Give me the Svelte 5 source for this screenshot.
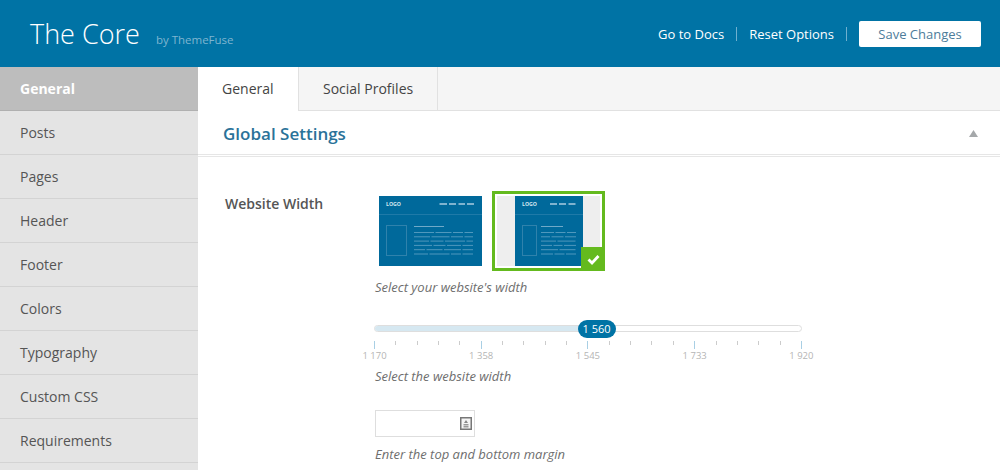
<script>
  const menu = ["General", "Posts", "Pages", "Header", "Footer", "Colors", "Typography", "Custom CSS", "Requirements"];
  const ticks = [];
  for (let i = 0; i <= 20; i++) ticks.push(i);
  const labels = { 0: "1 170", 5: "1 358", 10: "1 545", 15: "1 733", 20: "1 920" };
  // dash patterns of the fake text lines in the two layout previews
  const wideRows = ["20 1.500 16 1.500 10 1.500 12", "16 1.500 18 1.500 12 1.500 11", "15 1.500 13 1.500 20 1.500 9", "18 1.500 12 1.500 14 1.500 13", "11 1.500 16 1.500 17 1.500 13", "14 1.500 20 1.500 10 1.500 13"];
  const narrowRows = ["13 1.500 10 1.500 9", "9 1.500 12 1.500 11", "15 1.500 18", "11 1.500 9 1.500 12", "17 1.500 16", "12 1.500 10 1.500 10"];
</script>

<div class="page">
  <header class="top">
    <div class="brand">
      <span class="name">The Core</span>
      <span class="by">by ThemeFuse</span>
    </div>
    <nav class="actions">
      <a href="#docs">Go to Docs</a>
      <i class="sep"></i>
      <a href="#reset">Reset Options</a>
      <i class="sep"></i>
      <button>Save Changes</button>
    </nav>
  </header>

  <div class="body">
    <aside class="side">
      {#each menu as item, i}
        <div class="item" class:active={i === 0}>{item}</div>
      {/each}
    </aside>

    <main class="main">
      <div class="tabs">
        <div class="tab on">General</div>
        <div class="tab">Social Profiles</div>
      </div>

      <div class="section">
        <h2>Global Settings</h2>
        <svg class="caret" width="9" height="7" viewBox="0 0 9 7"><path d="M4.500 0 9 7H0z" fill="#a5a8aa" /></svg>
      </div>

      <div class="form">
        <div class="label">Website Width</div>
        <div class="controls">
          <div class="thumbs">
            <div class="thumb">
              <svg width="103" height="70" viewBox="0 0 103 70">
                <rect width="103" height="70" fill="#00699b" />
                <text x="7" y="10" class="logo">LOGO</text>
                <path d="M60.500 8h7.500M70 8h7M79.500 8h6.500M88 8h7" stroke="#7fb3cf" stroke-width="2" />
                <path d="M0 18.500h103" stroke="#1f7aa8" />
                <rect x="7.500" y="29.500" width="20" height="30" fill="none" stroke="#2f82ac" />
                <path d="M35 30.500h30" stroke="#6fa9c8" />
                {#each wideRows as dash, r}
                  <path d="M35 {36.500 + r * 4.300}h59" stroke="#4f98bd" stroke-dasharray={dash} />
                {/each}
              </svg>
            </div>
            <div class="thumb picked">
              <div class="box">
                <svg width="68" height="70" viewBox="0 0 68 70">
                  <rect width="68" height="70" fill="#00699b" />
                  <text x="7" y="10" class="logo">LOGO</text>
                  <path d="M35 8h7M44 8h7M53.500 8h7" stroke="#7fb3cf" stroke-width="2" />
                  <path d="M0 18.500h68" stroke="#1f7aa8" />
                  <rect x="7.500" y="29.500" width="14" height="30" fill="none" stroke="#2f82ac" />
                  <path d="M26 30.500h22" stroke="#6fa9c8" />
                  {#each narrowRows as dash, r}
                    <path d="M26 {36.500 + r * 4.300}h35" stroke="#4f98bd" stroke-dasharray={dash} />
                  {/each}
                </svg>
              </div>
              <span class="check">
                <svg width="13" height="11" viewBox="0 0 13 11"><path d="M1.500 5.500 5 9l6.500-7" fill="none" stroke="#fff" stroke-width="2.800" /></svg>
              </span>
            </div>
          </div>
          <p class="help first">Select your website's width</p>

          <div class="slider">
            <div class="track">
              <div class="fill" style="width: 52%"></div>
              <div class="handle" style="left: 52%">1 560</div>
            </div>
            <div class="scale">
              {#each ticks as t}
                <span class="tick" class:major={t % 5 === 0}>
                  {#if labels[t]}<em>{labels[t]}</em>{/if}
                </span>
              {/each}
            </div>
          </div>
          <p class="help second">Select the website width</p>

          <div class="field">
            <svg width="12" height="13" viewBox="0 0 12 13">
              <rect x="0.750" y="0.750" width="10.500" height="11.500" fill="#f4f4f4" stroke="#777" stroke-width="1.500" />
              <path d="M6 3 8 6H4z" fill="#888" />
              <path d="M3.500 7h5v1.500h-5zM3.500 9h5v1.500h-5z" fill="#999" />
            </svg>
          </div>
          <p class="help third">Enter the top and bottom margin</p>
        </div>
      </div>
    </main>
  </div>
</div>

<style>
  :global(body) {
    background: #fff;
    overflow: hidden;
  }

  .page {
    width: 1000px;
    height: 470px;
    overflow: hidden;
    display: flex;
    flex-direction: column;
    font-family: "Open Sans", sans-serif;
    color: #444;
  }

  .top {
    flex: 0 0 67px;
    background: #0073a5;
    display: flex;
    align-items: center;
    justify-content: space-between;
    padding: 0 19px 0 30px;
  }

  .brand {
    display: flex;
    align-items: baseline;
    gap: 16px;
    color: #fff;
  }

  .name {
    font-size: 27px;
    font-weight: 300;
  }

  .by {
    font-size: 11.500px;
    color: #7fb5d0;
  }

  .actions {
    display: flex;
    align-items: center;
    font-size: 13px;
  }

  .actions a {
    color: #fff;
    text-decoration: none;
    font-weight: 500;
  }

  .sep {
    width: 1px;
    height: 14px;
    background: #6fb0cf;
    margin: 0 12px;
  }

  .actions button {
    width: 122px;
    height: 26px;
    border: 0;
    border-radius: 2px;
    background: #fff;
    color: #4d7c9a;
    font: 400 13px "Open Sans", sans-serif;
  }

  .body {
    flex: 1;
    display: flex;
  }

  .side {
    flex: 0 0 198px;
    background: #e4e4e4;
  }

  .item {
    height: 43px;
    line-height: 43px;
    padding-left: 20px;
    font-size: 14px;
    color: #555;
    border-bottom: 1px solid #d3d3d3;
  }

  .item.active {
    background: #bdbdbd;
    color: #fff;
    font-weight: 700;
    border-bottom-color: #b0b0b0;
  }

  .main {
    flex: 1;
  }

  .tabs {
    height: 43px;
    display: flex;
    background: #f5f5f5;
    border-bottom: 1px solid #e1e1e1;
  }

  .tab {
    padding: 0 24px;
    line-height: 43px;
    font-size: 14px;
    color: #444;
    border-right: 1px solid #e1e1e1;
  }

  .tab.on {
    width: 101px;
    box-sizing: border-box;
    background: #fff;
    height: 44px;
  }

  .section {
    display: flex;
    align-items: center;
    justify-content: space-between;
    padding: 1px 22px 0 25px;
    height: 42px;
    border-bottom: 3px double #e6e6e6;
  }

  h2 {
    margin: 0;
    font-size: 17px;
    font-weight: 600;
    color: #2a7299;
  }

  .form {
    display: flex;
    padding-top: 34px;
  }

  .label {
    width: 150px;
    padding: 3px 0 0 27px;
    box-sizing: border-box;
    font-size: 14px;
    font-weight: 600;
    color: #555;
  }

  .controls {
    width: 470px;
    margin-left: 26px;
  }

  .thumbs {
    display: flex;
    gap: 10px;
    align-items: flex-start;
    margin-left: 5px;
  }

  .thumb {
    padding-top: 5px;
    line-height: 0;
  }

  .thumb.picked {
    position: relative;
    padding: 0;
    border: 3px solid #64ba1e;
    width: 107px;
    height: 74px;
  }

  .box {
    margin: 2px;
    height: 70px;
    background: #eee;
    display: flex;
    justify-content: center;
  }

  .check {
    position: absolute;
    right: -3px;
    bottom: -3px;
    width: 24px;
    height: 24px;
    background: #64ba1e;
    display: flex;
    align-items: center;
    justify-content: center;
  }

  .logo {
    font: 700 5.200px "Open Sans", sans-serif;
    fill: #d5e7f0;
  }

  .help {
    margin: 0;
    font-size: 13px;
    font-style: italic;
    color: #6e6e6e;
    line-height: 16px;
  }

  .help.first {
    margin: 8px 0 0 1px;
  }

  .help.second {
    margin: 0 0 0 1px;
  }

  .help.third {
    margin: 9px 0 0 1px;
  }

  .slider {
    width: 428px;
    padding-top: 30px;
    height: 43px;
  }

  .track {
    position: relative;
    height: 7px;
    border: 1px solid #dedede;
    border-radius: 4px;
    background: #fff;
    box-sizing: border-box;
  }

  .fill {
    height: 100%;
    background: #d6e8f1;
    border-radius: 4px 0 0 4px;
  }

  .handle {
    position: absolute;
    top: -6px;
    width: 38px;
    height: 18px;
    margin-left: -19px;
    border-radius: 9px;
    background: #0073a5;
    color: #fff;
    font-size: 11px;
    line-height: 18px;
    text-align: center;
  }

  .scale {
    display: flex;
    justify-content: space-between;
    margin-top: 9px;
  }

  .tick {
    position: relative;
    width: 1px;
    height: 4px;
    background: #ccc;
  }

  .tick.major {
    height: 8px;
    background: #a9cfe4;
  }

  .tick em {
    position: absolute;
    top: 8px;
    left: -20px;
    width: 41px;
    text-align: center;
    font-size: 9.500px;
    font-style: normal;
    color: #b5b5b5;
    line-height: 14px;
  }

  .field {
    width: 100px;
    height: 27px;
    margin: 26px 0 0 1px;
    box-sizing: border-box;
    border: 1px solid #dedede;
    display: flex;
    align-items: center;
    justify-content: flex-end;
    padding-right: 2px;
  }
</style>
